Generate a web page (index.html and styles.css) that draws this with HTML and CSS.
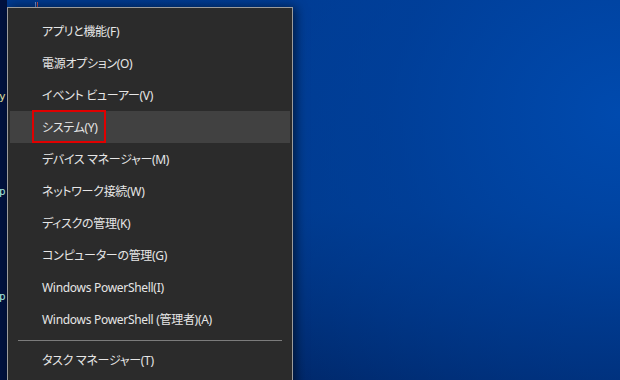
FILE: index.html
```html
<!DOCTYPE html>
<html lang="ja">
<head>
<meta charset="utf-8">
<link rel="stylesheet" href="styles.css">
</head>
<body>
<div class="desktop">
  <div class="console">
    <span class="frag frag-y">y</span>
    <span class="frag frag-p1">p</span>
    <span class="frag frag-p2">p</span>
  </div>
  <div class="ticks"><i class="tick t1"></i><i class="tick t2"></i></div>
  <div class="menu">
    <div class="item">アプリと機能(F)</div>
    <div class="item">電源オプション(O)</div>
    <div class="item">イベント ビューアー(V)</div>
    <div class="item hover">システム(Y)<span class="mark"></span></div>
    <div class="item">デバイス マネージャー(M)</div>
    <div class="item">ネットワーク接続(W)</div>
    <div class="item">ディスクの管理(K)</div>
    <div class="item">コンピューターの管理(G)</div>
    <div class="item">Windows PowerShell(I)</div>
    <div class="item">Windows PowerShell (管理者)(A)</div>
    <div class="sep"></div>
    <div class="item">タスク マネージャー(T)</div>
  </div>
</div>
</body>
</html>
```

FILE: styles.css
```css
html, body {
  margin: 0;
  padding: 0;
}
body {
  width: 620px;
  height: 380px;
  overflow: hidden;
}
.desktop {
  position: relative;
  width: 620px;
  height: 380px;
  display: flex;
  align-items: flex-start;
  padding-top: 7px;
  box-sizing: border-box;
  background:
    radial-gradient(ellipse 520px 460px at 100% 30%, rgba(0, 76, 178, 0.9) 0%, rgba(0, 66, 160, 0.6) 45%, rgba(0, 50, 130, 0) 100%),
    linear-gradient(to bottom, #003a8f 0%, #003888 55%, #002462 100%);
  font-family: "Noto Sans", "Noto Sans CJK JP", sans-serif;
}
.console {
  width: 7px;
  height: 380px;
  margin-top: -7px;
  background: #00123f;
  position: relative;
  overflow: hidden;
  flex: none;
  font-family: "DejaVu Sans Mono", monospace;
  font-size: 11px;
}
.frag {
  position: absolute;
  line-height: 12px;
}
.frag-y { left: -1px; top: 91px; color: #e8e4a0; }
.frag-p1 { left: -1px; top: 186px; color: #b0f0e0; }
.frag-p2 { left: -1px; top: 291px; color: #b0f0e0; }
.ticks {
  position: absolute;
  left: 35px;
  top: 2px;
  display: flex;
  gap: 1px;
}
.tick {
  width: 1px;
  height: 5px;
}
.t1 { background: #6a8fd0; }
.t2 { background: #c05050; }
.menu {
  width: 286px;
  height: 390px;
  flex: none;
  background: #2b2b2b;
  border: 1px solid #9c9c9c;
  border-bottom: none;
  padding: 7px 0;
  box-sizing: border-box;
  box-shadow: 3px 0 10px rgba(0, 0, 0, 0.55);
  position: relative;
}
.item {
  position: relative;
  height: 32px;
  margin: 0 2px;
  padding-left: 32px;
  display: flex;
  align-items: center;
  color: #e6e6e6;
  font-size: 12px;
  letter-spacing: -0.3px;
  font-feature-settings: "palt";
  white-space: nowrap;
}
.item.hover {
  background: #414141;
}
.mark {
  position: absolute;
  left: 22px;
  top: -1px;
  width: 70px;
  height: 29px;
  border: 2px solid #e00000;
}
.sep {
  height: 1px;
  background: #7c7c7c;
  margin: 5px 10px 3px 10px;
}
```
